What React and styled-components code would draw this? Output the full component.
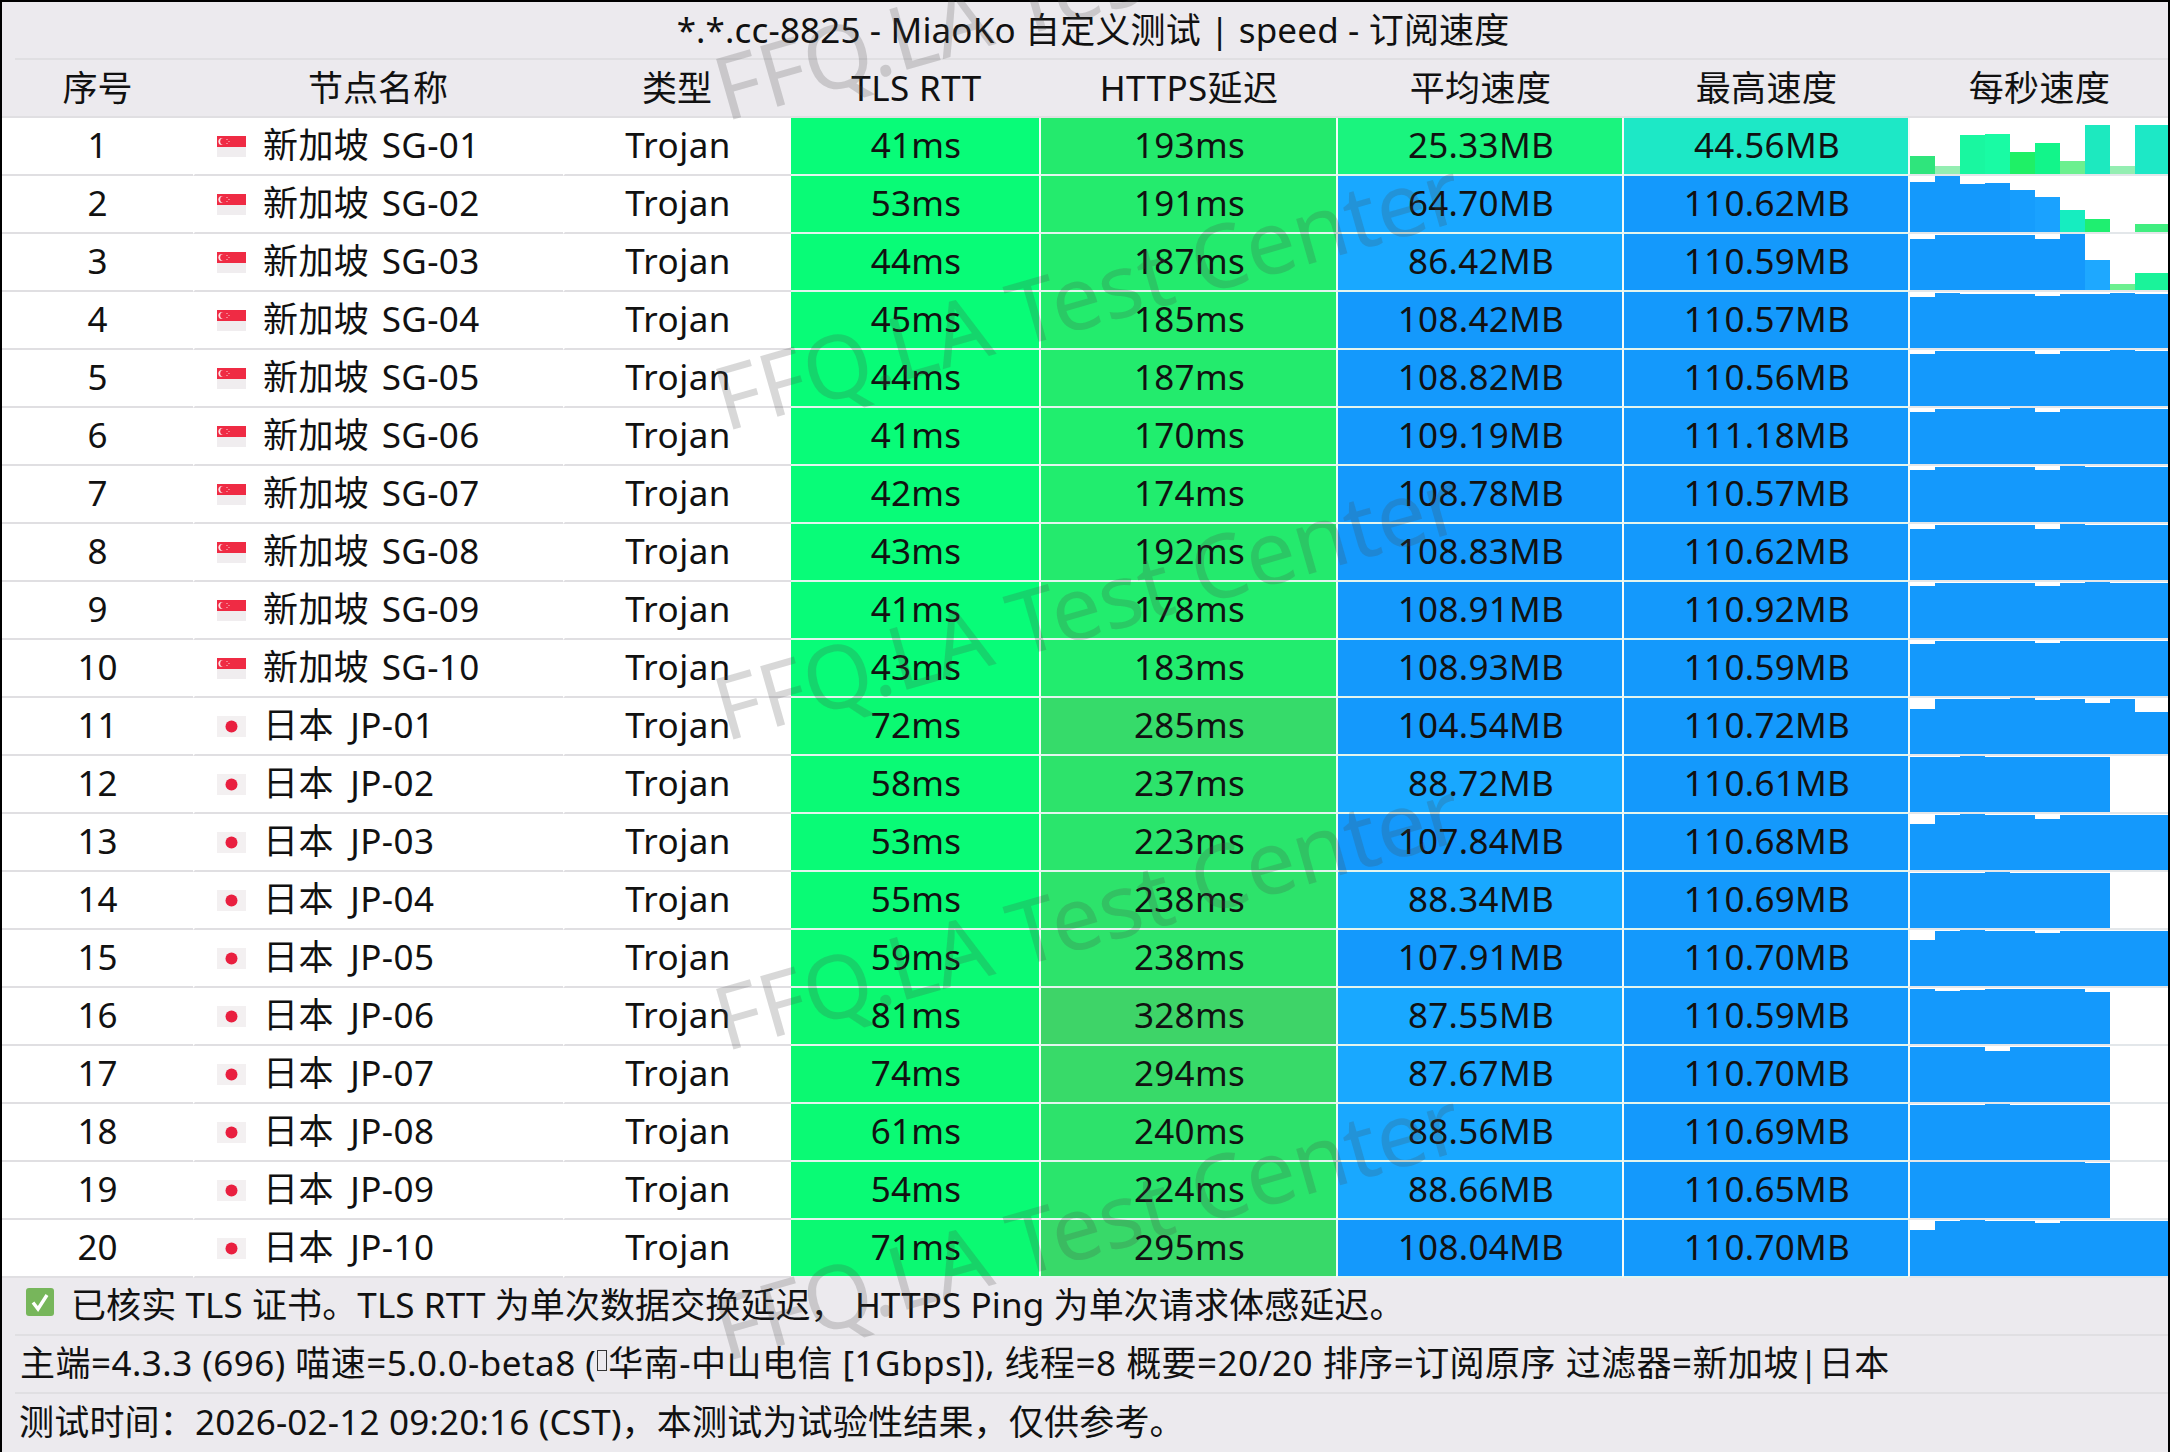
import styled, { createGlobalStyle } from 'styled-components';

const BLUE = '#1499fc';

const blue = (heights) => heights.map((h) => ({ h, c: BLUE }));
const FULL = [52, 55, 55, 55, 55, 53, 55, 55, 55, 55];
const EIGHT = [55, 55, 56, 55, 55, 55, 55, 55, 0, 0];

const rows = [
  { no: 1, flag: 'sg', name: '新加坡 SG-01', tls: 41, https: 193, avg: '25.33', max: '44.56', bars: [
    { h: 18, c: '#2fe57c' }, { h: 8, c: '#94eeb2' }, { h: 39, c: '#19f7a0' }, { h: 40, c: '#19fba4' }, { h: 22, c: '#1ff066' },
    { h: 31, c: '#12f58a' }, { h: 13, c: '#6cf08f' }, { h: 49, c: '#1de9bf' }, { h: 8, c: '#94eeb2' }, { h: 49, c: '#1de8c6' },
  ] },
  { no: 2, flag: 'sg', name: '新加坡 SG-02', tls: 53, https: 191, avg: '64.70', max: '110.62', bars: [
    { h: 50, c: BLUE }, { h: 56, c: BLUE }, { h: 48, c: BLUE }, { h: 49, c: BLUE }, { h: 42, c: '#169dfd' },
    { h: 35, c: '#1aa2ff' }, { h: 22, c: '#16edc0' }, { h: 13, c: '#1fef70' }, { h: 0, c: BLUE }, { h: 8, c: '#40ee80' },
  ] },
  { no: 3, flag: 'sg', name: '新加坡 SG-03', tls: 44, https: 187, avg: '86.42', max: '110.59', bars: [
    { h: 51, c: BLUE }, { h: 55, c: BLUE }, { h: 55, c: BLUE }, { h: 55, c: BLUE }, { h: 55, c: BLUE },
    { h: 51, c: BLUE }, { h: 56, c: BLUE }, { h: 30, c: '#1ea8ff' }, { h: 6, c: '#6cf090' }, { h: 17, c: '#1af39a' },
  ] },
  { no: 4, flag: 'sg', name: '新加坡 SG-04', tls: 45, https: 185, avg: '108.42', max: '110.57', bars: blue([51, 55, 54, 54, 54, 52, 54, 54, 55, 54]) },
  { no: 5, flag: 'sg', name: '新加坡 SG-05', tls: 44, https: 187, avg: '108.82', max: '110.56', bars: blue([52, 55, 55, 55, 55, 52, 55, 55, 56, 55]) },
  { no: 6, flag: 'sg', name: '新加坡 SG-06', tls: 41, https: 170, avg: '109.19', max: '111.18', bars: blue([52, 55, 55, 55, 56, 52, 55, 55, 55, 55]) },
  { no: 7, flag: 'sg', name: '新加坡 SG-07', tls: 42, https: 174, avg: '108.78', max: '110.57', bars: blue([52, 55, 55, 55, 55, 52, 56, 55, 55, 55]) },
  { no: 8, flag: 'sg', name: '新加坡 SG-08', tls: 43, https: 192, avg: '108.83', max: '110.62', bars: blue([51, 55, 55, 55, 55, 51, 56, 55, 55, 55]) },
  { no: 9, flag: 'sg', name: '新加坡 SG-09', tls: 41, https: 178, avg: '108.91', max: '110.92', bars: blue([52, 55, 55, 55, 55, 52, 55, 56, 55, 55]) },
  { no: 10, flag: 'sg', name: '新加坡 SG-10', tls: 43, https: 183, avg: '108.93', max: '110.59', bars: blue(FULL) },
  { no: 11, flag: 'jp', name: '日本 JP-01', tls: 72, https: 285, avg: '104.54', max: '110.72', bars: blue([45, 55, 55, 55, 56, 54, 55, 51, 55, 42]) },
  { no: 12, flag: 'jp', name: '日本 JP-02', tls: 58, https: 237, avg: '88.72', max: '110.61', bars: blue(EIGHT) },
  { no: 13, flag: 'jp', name: '日本 JP-03', tls: 53, https: 223, avg: '107.84', max: '110.68', bars: blue([46, 55, 56, 55, 55, 51, 55, 55, 55, 55]) },
  { no: 14, flag: 'jp', name: '日本 JP-04', tls: 55, https: 238, avg: '88.34', max: '110.69', bars: blue([55, 55, 55, 56, 55, 55, 55, 55, 0, 0]) },
  { no: 15, flag: 'jp', name: '日本 JP-05', tls: 59, https: 238, avg: '107.91', max: '110.70', bars: blue([46, 55, 56, 55, 55, 53, 55, 55, 55, 55]) },
  { no: 16, flag: 'jp', name: '日本 JP-06', tls: 81, https: 328, avg: '87.55', max: '110.59', bars: blue([55, 53, 54, 55, 55, 55, 55, 52, 0, 0]) },
  { no: 17, flag: 'jp', name: '日本 JP-07', tls: 74, https: 294, avg: '87.67', max: '110.70', bars: blue([55, 55, 55, 51, 55, 55, 55, 55, 0, 0]) },
  { no: 18, flag: 'jp', name: '日本 JP-08', tls: 61, https: 240, avg: '88.56', max: '110.69', bars: blue([55, 55, 55, 56, 55, 55, 55, 55, 0, 0]) },
  { no: 19, flag: 'jp', name: '日本 JP-09', tls: 54, https: 224, avg: '88.66', max: '110.65', bars: blue([56, 56, 56, 56, 56, 56, 56, 55, 0, 0]) },
  { no: 20, flag: 'jp', name: '日本 JP-10', tls: 71, https: 295, avg: '108.04', max: '110.70', bars: blue([46, 55, 56, 55, 55, 53, 55, 55, 55, 55]) },
];

const headers = ['序号', '节点名称', '类型', 'TLS RTT', 'HTTPS延迟', '平均速度', '最高速度', '每秒速度'];

const mix = (a, b, t) => {
  const k = Math.min(1, Math.max(0, t));
  return `rgb(${a.map((v, i) => Math.round(v + (b[i] - v) * k)).join(',')})`;
};
const tlsColor = (ms) => mix([8, 252, 120], [12, 248, 112], (ms - 41) / 40);
const httpsColor = (ms) => mix([32, 238, 110], [62, 212, 104], (ms - 170) / 158);
const speedColor = (mb) => {
  const v = parseFloat(mb);
  if (v < 30) return '#1af47e';
  if (v < 50) return '#1de8c6';
  if (v < 95) return '#19a8ff';
  return BLUE;
};

const GlobalStyle = createGlobalStyle`
  html, body {
    margin: 0;
    background: #000;
  }
`;

const Page = styled.div`
  position: relative;
  box-sizing: border-box;
  width: 2170px;
  height: 1452px;
  padding: 2px 2px 0;
  overflow: hidden;
  background: #000;
  color: #111;
  font-family: "Noto Sans", "Noto Sans CJK SC", sans-serif;
  font-size: 35px;
`;

const TitleBar = styled.div`
  height: 58px;
  background: #eceaee;
`;

const TitleText = styled.div`
  box-sizing: border-box;
  height: 58px;
  margin-left: 13px;
  padding-left: 3px;
  border-bottom: 2px solid #e0dfe2;
  line-height: 56px;
  letter-spacing: 0.15px;
  text-align: center;
`;

const Row = styled.div`
  display: grid;
  grid-template-columns: 191px 370px 228px 248px 297px 286px 286px 260px;
  height: 58px;
  background: ${(p) => (p.$head ? '#eceaee' : '#fff')};
`;

const Cell = styled.div`
  box-sizing: border-box;
  height: 58px;
  line-height: 53px;
  text-align: center;
  white-space: nowrap;
  border-bottom: 2px solid #e0dfe2;
`;

const HeadCell = styled(Cell)`
  line-height: 56px;
  padding-left: ${(p) => (p.$shift ? 3 : 0)}px;
  letter-spacing: ${(p) => (p.$shift ? 0.4 : 0)}px;
`;

const NameCell = styled(Cell)`
  display: flex;
  align-items: center;
  gap: 17px;
  padding-left: 22px;
  border-left: 2px solid #fff;
  text-align: left;
`;

const NameLabel = styled.span`
  margin-top: -3px;
  letter-spacing: 0.4px;
  word-spacing: ${(p) => (p.$jp ? 7 : 3)}px;
`;

const TypeCell = styled(Cell)`
  border-left: 2px solid #fff;
  letter-spacing: 0.45px;
`;

const ColorCell = styled(Cell)`
  padding-left: 2px;
  background: ${(p) => p.$bg};
  border-bottom-color: #e3f5ee;
  border-left: ${(p) => (p.$first ? 'none' : '2px solid #f4fbf8')};
  letter-spacing: 0.3px;
`;

const SpeedCell = styled.div`
  box-sizing: border-box;
  display: flex;
  align-items: flex-end;
  height: 58px;
  border-left: 2px solid #f4fbf8;
  border-bottom: 2px solid #e3e7ea;
`;

const Bar = styled.div`
  flex: 0 0 25px;
  height: ${(p) => p.$h}px;
  background: ${(p) => p.$c};

  &:last-child {
    flex: 1;
  }
`;

const FootRow = styled.div`
  height: 58px;
  background: #eceaee;
`;

const FootText = styled.div`
  box-sizing: border-box;
  display: flex;
  align-items: center;
  height: ${(p) => (p.$last ? 56 : 58)}px;
  margin-left: 13px;
  padding-left: ${(p) => (p.$last ? 4 : 5)}px;
  padding-bottom: ${(p) => (p.$last ? 6 : 8)}px;
  border-bottom: ${(p) => (p.$last ? 'none' : '2px solid #e0dfe2')};
  letter-spacing: ${(p) => p.$track}px;
  white-space: pre;
`;

const Tofu = styled.span`
  display: inline-block;
  box-sizing: border-box;
  width: 10px;
  height: 21px;
  margin: 0 1px;
  border: 1px solid #333;
`;

const CheckIcon = styled.svg`
  flex: none;
  width: 28px;
  height: 28px;
  margin: 0 17px 0 6px;
`;

const Watermark = styled.div`
  position: absolute;
  left: ${(p) => p.$x}px;
  top: ${(p) => p.$y}px;
  transform: rotate(-16deg);
  transform-origin: left center;
  color: rgba(70, 70, 70, 0.21);
  font-family: "Noto Sans", sans-serif;
  font-size: 88px;
  line-height: 1;
  white-space: pre;
  pointer-events: none;
`;

const SgFlag = () => (
  <svg width="29" height="21" viewBox="0 0 29 21">
    <rect width="29" height="21" fill="#f0edef" />
    <rect width="29" height="11" fill="#ef2b44" />
    <circle cx="5" cy="5.5" r="3.6" fill="#fbe4e6" />
    <circle cx="6.6" cy="5.5" r="3.4" fill="#ef2b44" />
    <circle cx="10" cy="3.5" r="0.6" fill="#fbe4e6" />
    <circle cx="12" cy="5.5" r="0.6" fill="#fbe4e6" />
    <circle cx="10" cy="7.5" r="0.6" fill="#fbe4e6" />
  </svg>
);

const JpFlag = () => (
  <svg width="29" height="21" viewBox="0 0 29 21">
    <rect width="29" height="21" fill="#f3f0f1" />
    <circle cx="14.5" cy="10.5" r="6" fill="#e91f3f" />
  </svg>
);

const App = () => (
  <Page>
    <GlobalStyle />
    <TitleBar>
      <TitleText>*.*.cc-8825 - MiaoKo 自定义测试 | speed - 订阅速度</TitleText>
    </TitleBar>
    <Row $head>
      {headers.map((h, i) => (
        <HeadCell key={h} $shift={i >= 3}>{h}</HeadCell>
      ))}
    </Row>
    {rows.map((r) => (
      <Row key={r.no}>
        <Cell>{r.no}</Cell>
        <NameCell>
          {r.flag === 'sg' ? <SgFlag /> : <JpFlag />}
          <NameLabel $jp={r.flag === 'jp'}>{r.name}</NameLabel>
        </NameCell>
        <TypeCell>Trojan</TypeCell>
        <ColorCell $first $bg={tlsColor(r.tls)}>{r.tls}ms</ColorCell>
        <ColorCell $bg={httpsColor(r.https)}>{r.https}ms</ColorCell>
        <ColorCell $bg={speedColor(r.avg)}>{r.avg}MB</ColorCell>
        <ColorCell $bg={speedColor(r.max)}>{r.max}MB</ColorCell>
        <SpeedCell>
          {r.bars.map((b, i) => (
            <Bar key={i} $h={b.h} $c={b.c} />
          ))}
        </SpeedCell>
      </Row>
    ))}
    <FootRow>
      <FootText $track={0.1}>
        <CheckIcon viewBox="0 0 28 28">
          <rect width="28" height="28" rx="3" fill="#77b65b" />
          <path d="M7 14.5l5 6.5 9-14" fill="none" stroke="#fff" strokeWidth="3.4" />
        </CheckIcon>
        已核实 TLS 证书。TLS RTT 为单次数据交换延迟， HTTPS Ping 为单次请求体感延迟。
      </FootText>
    </FootRow>
    <FootRow>
      <FootText $track={0.48}>
        主端=4.3.3 (696) 喵速=5.0.0-beta8 (<Tofu />华南-中山电信 [1Gbps]), 线程=8 概要=20/20 排序=订阅原序 过滤器=新加坡|日本
      </FootText>
    </FootRow>
    <FootRow>
      <FootText $last $track={0.2}>测试时间：2026-02-12 09:20:16 (CST)，本测试为试验性结果，仅供参考。</FootText>
    </FootRow>
    {[45, 355, 665, 975, 1285].map((y) => (
      <Watermark key={y} $x={716} $y={y}>FFQ.LA Test Center</Watermark>
    ))}
  </Page>
);

export default App;
